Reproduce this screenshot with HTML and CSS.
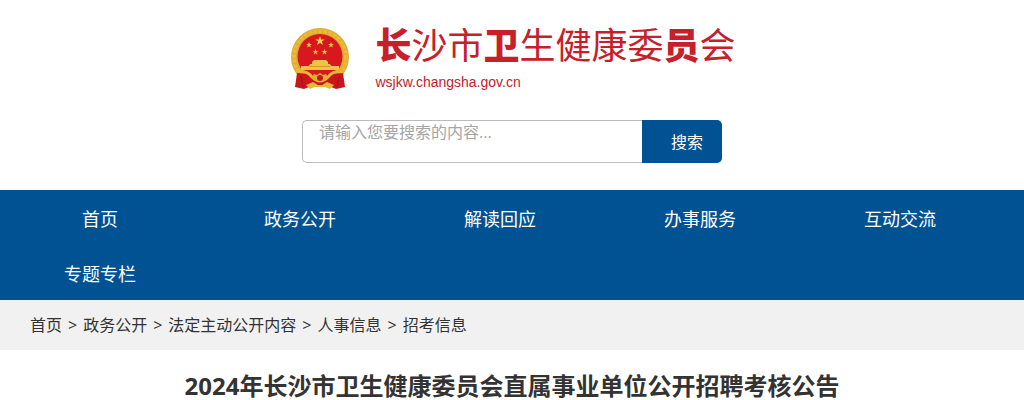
FILE: index.html
```html
<!DOCTYPE html>
<html lang="zh-CN">
<head>
    <meta charset="UTF-8">
    <meta name="viewport" content="width=device-width, initial-scale=1">
    <title>2024年长沙市卫生健康委员会直属事业单位公开招聘考核公告</title>
    <link rel="stylesheet" href="styles.css">
</head>
<body>
    <div class="header">
        <a class="logo" href="#">
            <svg class="emblem" viewBox="0 0 60 64" aria-hidden="true">
                <defs>
                    <path id="star" d="M0-5L1.2-1.6H4.8L1.9.6 3 4 0 1.9-3 4-1.9.6-4.8-1.6H-1.2Z"/>
                </defs>
                <!-- 麦穗外圈 -->
                <circle cx="30" cy="30" r="29" fill="#e0a92c"/>
                <circle cx="30" cy="30" r="26" fill="none" stroke="#e9b93c" stroke-width="4" stroke-dasharray="4 1"/>
                <circle cx="30" cy="29.500" r="22.500" fill="#d7191f"/>
                <!-- 五星 -->
                <g fill="#f3cc4d">
                    <use href="#star" transform="translate(30 14)"/>
                    <use href="#star" transform="translate(19 18) scale(.6)"/>
                    <use href="#star" transform="translate(41 18) scale(.6)"/>
                    <use href="#star" transform="translate(25.500 25) scale(.6)"/>
                    <use href="#star" transform="translate(34.500 25) scale(.6)"/>
                </g>
                <!-- 天安门 -->
                <path fill="#efc345" d="M22 35L24 33H36L38 35V37H40L41 39H49V43H11V39H19L20 37H22Z"/>
                <path stroke="#d39a26" d="M20 39.500H40"/>
                <!-- 绶带和齿轮 -->
                <path fill="#c9151c" d="M7 46L19 47 30 52 41 47 53 46 55 60 46 62 36 58H24L14 62 5 60Z"/>
                <path fill="none" stroke="#e7b736" stroke-width="3" d="M8 44Q18 44 22 50Q26 54 30 54Q34 54 38 50Q42 44 52 44"/>
                <path fill="#e2ad31" d="M24 47L27 48 30 46 33 48 36 47 38 51 35 54H25L22 51Z"/>
                <circle cx="30" cy="51" r="3" fill="#c9151c"/>
                <path fill="#e7b736" d="M16 58L23 55 28 58H32L37 55 44 58 40 62 35 60H25L20 62Z"/>
                <path fill="none" stroke="#a51016" d="M11 49L13 60M49 49L47 60"/>
            </svg>
            <span class="logo-text">
                <span class="logo-name"><b>长</b>沙市<b>卫</b>生健康委<b>员</b>会</span>
                <span class="logo-url">wsjkw.changsha.gov.cn</span>
            </span>
        </a>
        <form class="search">
            <input class="search-input" type="text" placeholder="请输入您要搜索的内容..." aria-label="搜索内容">
            <button class="search-btn" type="button">搜索</button>
        </form>
    </div>
    <nav class="nav">
        <a href="#">首页</a>
        <a href="#">政务公开</a>
        <a href="#">解读回应</a>
        <a href="#">办事服务</a>
        <a href="#">互动交流</a>
        <a href="#">专题专栏</a>
    </nav>
    <div class="position">
        <a href="#">首页</a>
        <span>&gt;</span>
        <a href="#">政务公开</a>
        <span>&gt;</span>
        <a href="#">法定主动公开内容</a>
        <span>&gt;</span>
        <a href="#">人事信息</a>
        <span>&gt;</span>
        <a href="#">招考信息</a>
    </div>
    <h1 class="title">2024年长沙市卫生健康委员会直属事业单位公开招聘考核公告</h1>
</body>
</html>
```
FILE: styles.css
```css
*{
    box-sizing: border-box;
}
body{
    margin: 0;
    background: #fff;
    color: #333;
    font-family: "Open Sans", "Noto Sans CJK SC", sans-serif;
    font-size: 16px;
}
a{
    color: inherit;
    text-decoration: none;
}
.header{
    display: flex;
    flex-direction: column;
    align-items: center;
    padding: 24px 0 27px;
}
.logo{
    display: flex;
    gap: 25px;
    padding-left: 2px;
    color: #c7202a;
}
.emblem{
    width: 60px;
    height: 64px;
    margin-top: 3px;
}
.logo-text{
    display: flex;
    flex-direction: column;
}
.logo-name{
    font-family: "Noto Sans CJK SC", sans-serif;
    font-size: 36px;
    line-height: 38px;
}
.logo-name b{
    font-weight: 900;
}
.logo-url{
    font-family: "Liberation Sans", Arial, sans-serif;
    font-size: 14px;
    line-height: 40px;
}
.search{
    display: flex;
    width: 420px;
    max-width: 100%;
    height: 43px;
    margin-top: 18px;
}
.search-input{
    flex: 1;
    min-width: 0;
    padding: 0 16px 20px;
    border: 1px solid #bbb;
    border-right: 0;
    border-radius: 5px 0 0 5px;
    outline: none;
    font: inherit;
}
.search-input::placeholder{
    color: #a5a5a5;
}
.search-btn{
    width: 80px;
    padding: 0 0 2px 10px;
    border: 0;
    border-radius: 0 5px 5px 0;
    background: #005293;
    color: #fff;
    font: inherit;
    cursor: pointer;
}
.nav{
    display: flex;
    flex-wrap: wrap;
    background: #005293;
}
.nav a{
    width: 200px;
    padding-top: 4px;
    color: #fff;
    font-size: 18px;
    line-height: 51px;
    text-align: center;
}
.position{
    display: flex;
    flex-wrap: wrap;
    gap: 6px;
    padding: 0 30px;
    background: #f1f1f1;
    line-height: 50px;
}
.title{
    margin: 0;
    padding: 18px 15px 0;
    font-size: 24px;
    line-height: 36px;
    text-align: center;
}
```
